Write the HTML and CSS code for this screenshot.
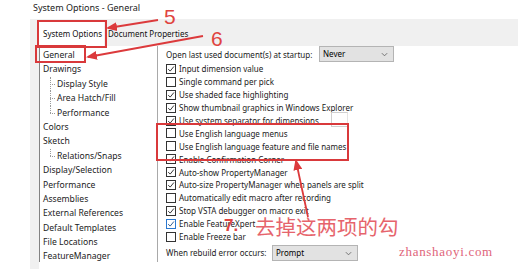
FILE: index.html
```html
<!DOCTYPE html>
<html lang="en">
<head>
    <meta charset="UTF-8">
    <title>System Options - General</title>
    <link rel="stylesheet" href="styles.css">
</head>
<body>
    <div class="title">System Options - General</div>

    <div class="dialog">
        <div class="tabs">
            <div class="tab active">System Options</div>
            <div class="tab">Document Properties</div>
        </div>

        <div class="panes">
            <ul class="tree">
                <li class="selected">General</li>
                <li>Drawings</li>
                <li class="child">Display Style</li>
                <li class="child">Area Hatch/Fill</li>
                <li class="child last">Performance</li>
                <li>Colors</li>
                <li>Sketch</li>
                <li class="child last">Relations/Snaps</li>
                <li>Display/Selection</li>
                <li>Performance</li>
                <li>Assemblies</li>
                <li>External References</li>
                <li>Default Templates</li>
                <li>File Locations</li>
                <li>FeatureManager</li>
            </ul>

            <div class="options">
                <div class="field-row top">
                    <span class="label wide">Open last used document(s) at startup:</span>
                    <div class="select never">Never
                        <svg class="chev" viewBox="0 0 8 5"><path d="M1 1 L4 4 L7 1"/></svg>
                    </div>
                </div>

                <div class="checks">
                    <label class="check on"><span class="box"><svg viewBox="0 0 8 8"><path d="M1.2 4.1 L3.2 6.1 L6.9 1.5"/></svg></span>Input dimension value</label>
                    <label class="check"><span class="box"></span>Single command per pick</label>
                    <label class="check on"><span class="box"><svg viewBox="0 0 8 8"><path d="M1.2 4.1 L3.2 6.1 L6.9 1.5"/></svg></span>Use shaded face highlighting</label>
                    <label class="check on"><span class="box"><svg viewBox="0 0 8 8"><path d="M1.2 4.1 L3.2 6.1 L6.9 1.5"/></svg></span>Show thumbnail graphics in Windows Explorer</label>
                    <label class="check on sep"><span class="box"><svg viewBox="0 0 8 8"><path d="M1.2 4.1 L3.2 6.1 L6.9 1.5"/></svg></span>Use system separator for dimensions<span class="mini-input"></span></label>
                    <label class="check"><span class="box"></span>Use English language menus</label>
                    <label class="check"><span class="box"></span>Use English language feature and file names</label>
                    <label class="check on"><span class="box"><svg viewBox="0 0 8 8"><path d="M1.2 4.1 L3.2 6.1 L6.9 1.5"/></svg></span>Enable Confirmation Corner</label>
                    <label class="check on"><span class="box"><svg viewBox="0 0 8 8"><path d="M1.2 4.1 L3.2 6.1 L6.9 1.5"/></svg></span>Auto-show PropertyManager</label>
                    <label class="check on"><span class="box"><svg viewBox="0 0 8 8"><path d="M1.2 4.1 L3.2 6.1 L6.9 1.5"/></svg></span>Auto-size PropertyManager when panels are split</label>
                    <label class="check"><span class="box"></span>Automatically edit macro after recording</label>
                    <label class="check on"><span class="box"><svg viewBox="0 0 8 8"><path d="M1.2 4.1 L3.2 6.1 L6.9 1.5"/></svg></span>Stop VSTA debugger on macro exit</label>
                    <label class="check on focus"><span class="box"><svg viewBox="0 0 8 8"><path d="M1.2 4.1 L3.2 6.1 L6.9 1.5"/></svg></span>Enable FeatureXpert</label>
                    <label class="check"><span class="box"></span>Enable Freeze bar</label>
                </div>

                <div class="field-row bottom">
                    <span class="label narrow">When rebuild error occurs:</span>
                    <div class="select prompt">Prompt
                        <svg class="chev" viewBox="0 0 8 5"><path d="M1 1 L4 4 L7 1"/></svg>
                    </div>
                </div>
            </div>
        </div>
    </div>

    <!-- red markup drawn over the screenshot -->
    <svg class="markup" width="518" height="269" viewBox="0 0 518 269">
        <defs>
            <marker id="head" markerWidth="11" markerHeight="9" refX="9" refY="4.5" orient="auto" markerUnits="userSpaceOnUse">
                <path d="M0 0 L11 4.5 L0 9 Z" fill="#dc3a3c"/>
            </marker>
        </defs>
        <rect x="38" y="21" width="68" height="26" class="box-red"/>
        <rect x="36" y="46" width="49" height="16" class="box-red"/>
        <rect x="157" y="124" width="191" height="36" class="box-red"/>
        <line x1="158" y1="20" x2="108" y2="28" class="arrow" marker-end="url(#head)"/>
        <line x1="203" y1="36" x2="88" y2="57" class="arrow" marker-end="url(#head)"/>
        <line x1="308" y1="217" x2="296" y2="161" class="arrow" marker-end="url(#head)"/>
    </svg>
    <div class="num n5">5</div>
    <div class="num n6">6</div>
    <div class="num n7">7.</div>
    <div class="note">去掉这两项的勾</div>
    <div class="watermark">zhanshaoyi.com</div>
</body>
</html>
```

FILE: styles.css
```css
body {
    margin: 0;
    width: 518px;
    height: 269px;
    overflow: hidden;
    position: relative;
    background: #fff;
    font-family: "Noto Sans", "Open Sans", sans-serif;
    font-size: 8px;
    color: #1b1b1b;
}
.title {
    height: 19px;
    padding-left: 33px;
    line-height: 15px;
    font-size: 9px;
    color: #222;
}
.dialog {
    margin-left: 30px;
    height: 250px;
    background: #f0f0f0;
    display: flex;
    flex-direction: column;
}
.tabs {
    height: 27px;
    display: flex;
    align-items: flex-end;
    padding-left: 8px;
}
.tab {
    height: 24px;
    line-height: 24px;
    padding: 0 4px;
    color: #111;
    white-space: nowrap;
}
.tab.active {
    box-sizing: border-box;
    width: 66px;
    background: #fff;
    padding-left: 5px;
}
.panes {
    flex: 1;
    display: flex;
    background: #fff;
    margin-left: 9px;
}
.tree {
    list-style: none;
    margin: 0;
    padding: 2px 0 0 0;
    width: 117px;
    border-left: 1px solid #828282;
    border-right: 1px solid #a9a9a9;
    height: 214px;
    font-size: 8.6px;
}
.tree li {
    height: 14.4px;
    line-height: 14.4px;
    padding-left: 3px;
    position: relative;
}
.tree li.child {
    padding-left: 17px;
}
.tree li.child::before {
    content: "";
    position: absolute;
    left: 10px;
    top: 0;
    bottom: 0;
    border-left: 1px dotted #9a9a9a;
}
.tree li.child.last::before {
    bottom: 50%;
}
.tree li.child::after {
    content: "";
    position: absolute;
    left: 10px;
    top: 50%;
    width: 5px;
    border-top: 1px dotted #9a9a9a;
}
.options {
    flex: 1;
    padding-left: 8px;
}
.field-row {
    display: flex;
    align-items: center;
}
.field-row.top {
    height: 16.5px;
}
.field-row.bottom {
    height: 20px;
}
.label.wide {
    width: 153px;
}
.label.narrow {
    width: 106px;
}
.select {
    position: relative;
    height: 14px;
    line-height: 14px;
    padding-left: 3px;
    background: #e2e2e2;
    border: 1px solid #b4b4b4;
    color: #000;
}
.select.never {
    width: 70px;
}
.select.prompt {
    width: 81px;
}
.chev {
    position: absolute;
    right: 5px;
    top: 5px;
    width: 7px;
    height: 5px;
    fill: none;
    stroke: #666;
    stroke-width: 1;
}
.checks {
    display: flex;
    flex-direction: column;
}
.check {
    height: 12.9px;
    display: flex;
    align-items: center;
    white-space: nowrap;
}
.check.sep {
    width: 182px;
}
.box {
    width: 8px;
    height: 8px;
    border: 1px solid #333;
    background: #fff;
    margin-right: 3px;
    flex: none;
    display: flex;
}
.box svg {
    width: 8px;
    height: 8px;
    fill: none;
    stroke: #222;
    stroke-width: 0.9;
}
.check.focus .box {
    border-color: #2a78d0;
}
.check.focus .box svg {
    stroke: #1d4f8a;
}
.mini-input {
    margin-left: auto;
    width: 15px;
    height: 13px;
    border: 1px solid #cfcfcf;
    border-right-color: #e4e4e4;
    align-self: flex-end;
}
.markup {
    position: absolute;
    left: 0;
    top: 0;
    pointer-events: none;
}
.box-red {
    fill: none;
    stroke: #d9393b;
    stroke-width: 2;
}
.arrow {
    stroke: #dc3a3c;
    stroke-width: 1.8;
}
.num {
    position: absolute;
    font-family: "Liberation Sans", Arial, sans-serif;
    color: #e0443f;
    line-height: 1;
}
.n5 {
    left: 164px;
    top: 6px;
    font-size: 21px;
}
.n6 {
    left: 211px;
    top: 28px;
    font-size: 21px;
}
.n7 {
    left: 224px;
    top: 217px;
    font-size: 17px;
    font-weight: bold;
}
.note {
    position: absolute;
    left: 255px;
    top: 215px;
    font-family: "Noto Sans CJK SC", sans-serif;
    font-size: 20.5px;
    line-height: 1.1;
    color: #e6646c;
}
.watermark {
    position: absolute;
    left: 399px;
    top: 244px;
    font-family: "Liberation Serif", serif;
    font-size: 13px;
    letter-spacing: 0.7px;
    color: #e0647a;
}
```
